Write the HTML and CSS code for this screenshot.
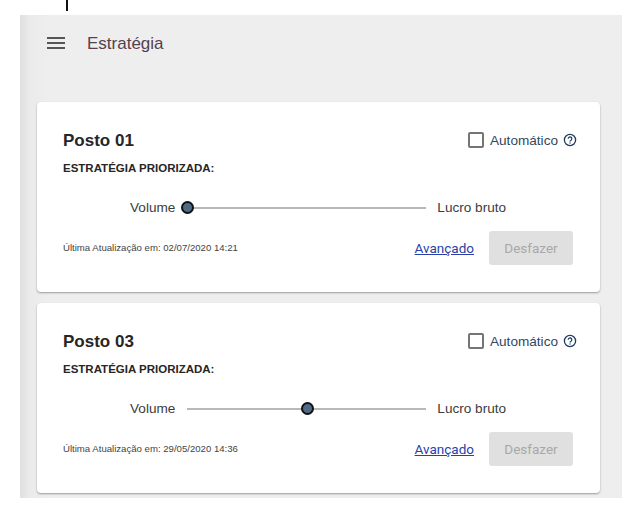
FILE: index.html
```html
<!DOCTYPE html>
<html lang="pt">
<head>
<meta charset="utf-8">
<title>Estratégia</title>
<link rel="stylesheet" href="styles.css">
</head>
<body>
<div class="tick"></div>
<main class="panel">
  <header class="topbar">
    <svg class="menu" width="18" height="12" viewBox="0 0 18 12"><path d="M0 1h18M0 6h18M0 11h18" stroke="#555" stroke-width="2" fill="none"/></svg>
    <h1 class="title">Estratégia</h1>
  </header>
  <section class="card">
    <div class="row-head">
      <h2 class="name">Posto 01</h2>
      <div class="auto">
        <span class="check"></span>
        <span class="auto-label">Automático</span>
        <svg class="help" width="14" height="14" viewBox="0 0 14 14"><circle cx="7" cy="7" r="5.6" fill="none" stroke="#1f3a5f" stroke-width="1.3"/><path d="M5.2 5.7a1.8 1.8 0 1 1 2.8 1.5c-.7.4-1 .7-1 1.4" fill="none" stroke="#1f3a5f" stroke-width="1.2"/><rect x="6.4" y="9.4" width="1.2" height="1.2" fill="#1f3a5f"/></svg>
      </div>
    </div>
    <p class="sub">ESTRATÉGIA PRIORIZADA:</p>
    <div class="slider-row">
      <span class="end">Volume</span>
      <div class="track"><span class="thumb thumb-start"></span></div>
      <span class="end">Lucro bruto</span>
    </div>
    <div class="row-foot">
      <span class="updated">Última Atualização em: 02/07/2020 14:21</span>
      <div class="actions">
        <a class="link" href="#">Avançado</a>
        <button class="undo" disabled>Desfazer</button>
      </div>
    </div>
  </section>
  <section class="card">
    <div class="row-head">
      <h2 class="name">Posto 03</h2>
      <div class="auto">
        <span class="check"></span>
        <span class="auto-label">Automático</span>
        <svg class="help" width="14" height="14" viewBox="0 0 14 14"><circle cx="7" cy="7" r="5.6" fill="none" stroke="#1f3a5f" stroke-width="1.3"/><path d="M5.2 5.7a1.8 1.8 0 1 1 2.8 1.5c-.7.4-1 .7-1 1.4" fill="none" stroke="#1f3a5f" stroke-width="1.2"/><rect x="6.4" y="9.4" width="1.2" height="1.2" fill="#1f3a5f"/></svg>
      </div>
    </div>
    <p class="sub">ESTRATÉGIA PRIORIZADA:</p>
    <div class="slider-row">
      <span class="end">Volume</span>
      <div class="track"><span class="thumb thumb-mid"></span></div>
      <span class="end">Lucro bruto</span>
    </div>
    <div class="row-foot">
      <span class="updated">Última Atualização em: 29/05/2020 14:36</span>
      <div class="actions">
        <a class="link" href="#">Avançado</a>
        <button class="undo" disabled>Desfazer</button>
      </div>
    </div>
  </section>
</main>
</body>
</html>
```
FILE: styles.css
```css
* { box-sizing: border-box; }
html, body { margin: 0; padding: 0; background: #fff; }
body { width: 631px; height: 511px; overflow: hidden; font-family: "Liberation Sans", Arial, sans-serif; }
.tick { width: 2px; height: 11px; margin-left: 66px; background: #111; }
.panel {
  width: 602px; height: 483px; margin: 4px 0 0 20px; padding: 0 22px 0 17px; overflow: hidden;
  background: linear-gradient(90deg, #e0e0e0 0, #ebebeb 10px, #eeeeee 30px);
}
.topbar { height: 87px; padding: 22px 0 0 10px; display: flex; align-items: flex-start; }
.menu { flex: none; }
.title { margin: -5px 0 0 22px; font-size: 17px; line-height: 24px; font-weight: 400; color: #55404f; }
.card {
  height: 190px; margin-bottom: 11px; padding: 27px 27px 0 26px; background: #fff; border-radius: 4px;
  box-shadow: 0 1px 2px rgba(0,0,0,.35);
}
.row-head { display: flex; justify-content: space-between; align-items: center; height: 22px; }
.name { margin: 2px 0 0; font-size: 17px; line-height: 22px; font-weight: 700; color: #262626; }
.auto { display: flex; align-items: center; margin-right: -4px; }
.check { width: 16px; height: 16px; border: 2px solid #757575; border-radius: 2px; }
.auto-label { margin-left: 6px; font-size: 13.6px; color: #33475f; }
.help { margin-left: 5px; }
.sub { margin: 11px 0 0; font-size: 11.5px; line-height: 12px; font-weight: 700; color: #262626; }
.slider-row { display: flex; align-items: center; height: 20px; margin-top: 24px; padding-left: 67px; }
.end { font-size: 13.6px; line-height: 20px; color: #3c3c3c; }
.track { position: relative; width: 239px; height: 2px; margin: 0 11px 0 12px; background: #b8b8b8; }
.thumb {
  position: absolute; top: -6px; width: 13px; height: 13px; border-radius: 50%;
  background: #4f6a85; border: 2px solid #111;
}
.thumb-start { left: -6px; }
.thumb-mid { left: 114px; }
.row-foot { display: flex; justify-content: space-between; align-items: center; height: 34px; margin-top: 13px; }
.updated { margin-bottom: 2px; font-size: 9.6px; color: #444; }
.actions { display: flex; align-items: center; }
.link { font-family: Roboto, sans-serif; font-size: 13.5px; color: #2a3fa8; text-decoration: underline; }
.undo {
  width: 84px; height: 34px; margin: 0 0 0 15px; padding: 0; border: 0; border-radius: 3px;
  background: #e0e0e0; color: #a8a8a8; font-family: Roboto, sans-serif; font-size: 13.5px;
}
```
